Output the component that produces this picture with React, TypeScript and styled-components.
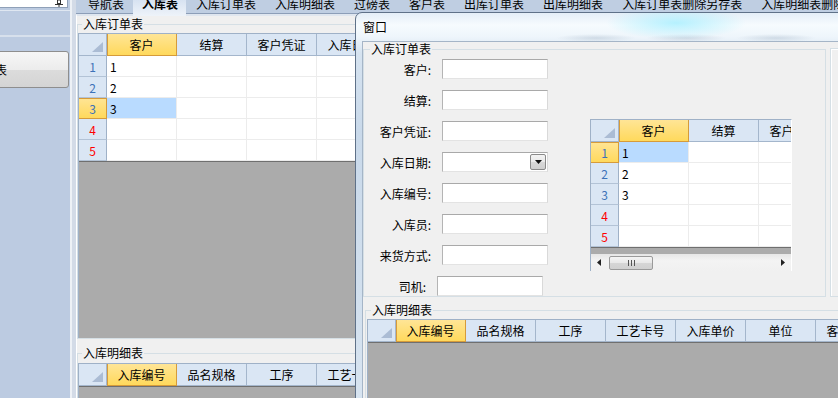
import { FC } from 'react';
import styled, { createGlobalStyle } from 'styled-components';

const tabs = ['导航表', '入库表', '入库订单表', '入库明细表', '过磅表', '客户表', '出库订单表', '出库明细表', '入库订单表删除另存表', '入库明细表删除另存表'];
const orderColumns = ['客户', '结算', '客户凭证', '入库日期', '入库编号', '入库员', '来货方式'];
const detailColumns = ['入库编号', '品名规格', '工序', '工艺卡号', '入库单价', '单位', '客户名称'];
const formFields = [
  { label: '客户:' },
  { label: '结算:' },
  { label: '客户凭证:' },
  { label: '入库日期:', dropdown: true },
  { label: '入库编号:' },
  { label: '入库员:' },
  { label: '来货方式:' },
  { label: '司机:', shift: 5 },
];

interface IGridProps {
  columns: string[];
  values?: string[];
  rowCount?: number;
  activeCol?: number;
  activeRow?: number;
  fill: number;
  scroll?: boolean;
  width?: number;
}

const DataGrid: FC<IGridProps> = ({ columns, values = [], rowCount = 0, activeCol = 0, activeRow = -1, fill, scroll, width }) => (
  <GridBox $width={width}>
    <HeadRow>
      <Corner>
        <svg width='11' height='10'><polygon points='11,0 11,10 0,10' fill='#abbcd4' /></svg>
      </Corner>
      {columns.map((c, i) => <HeadCell key={c + i} $active={i === activeCol}>{c}</HeadCell>)}
    </HeadRow>
    {Array.from({ length: rowCount }).map((_, r) => (
      <Row key={r}>
        <RowHead $active={r === activeRow} $fresh={r >= values.length}>{r + 1}</RowHead>
        {columns.map((c, i) => (
          <Cell key={c + i} $selected={r === activeRow && i === activeCol}>{i === 0 ? values[r] : ''}</Cell>
        ))}
      </Row>
    ))}
    <Blank $height={fill} />
    {scroll && (
      <ScrollBar>
        <svg width='4' height='7'><polygon points='4,0 4,7 0,3.5' fill='#222' /></svg>
        <Thumb>
          <svg width='7' height='6'>
            <path d='M0.5 0v6M3.5 0v6M6.5 0v6' stroke='#555' strokeWidth='1' />
          </svg>
        </Thumb>
        <ScrollSpace />
        <svg width='4' height='7'><polygon points='0,0 4,3.5 0,7' fill='#222' /></svg>
      </ScrollBar>
    )}
  </GridBox>
);

const App: FC = () => {
  return (
    <>
      <GlobalStyle />
      <Screen>
        <SidePanel>
          <PinBar>
            <svg width='8' height='7'>
              <rect x='2.5' y='0' width='3' height='3.5' fill='none' stroke='#333' strokeWidth='1' />
              <path d='M0 4.5h8M4 4.5v3' stroke='#333' strokeWidth='1' />
            </svg>
          </PinBar>
          <SideBand />
          <SideButton>入库表</SideButton>
        </SidePanel>
        <Splitter />

        <Workspace>
          <TabStrip>
            {tabs.map((t, i) => (
              <Tab key={t} $active={i === 1}><TabText>{t}</TabText></Tab>
            ))}
          </TabStrip>
          <TabBody>
            <Group>
              <Legend>入库订单表</Legend>
              <DataGrid columns={orderColumns} values={['1', '2', '3']} rowCount={5} activeRow={2} fill={177} />
            </Group>
            <Group $gap={7} $pad={3}>
              <Legend>入库明细表</Legend>
              <DataGrid columns={detailColumns} fill={40} />
            </Group>
          </TabBody>
        </Workspace>

        <Window>
          <TitleBar>窗口</TitleBar>
          <Client>
            <TopRow>
              <Group $width={463} $pad={3}>
                <Legend $indent={6}>入库订单表</Legend>
                <FormArea>
                  <Form>
                    {formFields.map((f) => (
                      <FormRow key={f.label} $shift={f.shift || 0}>
                        <Label>{f.label}</Label>
                        <Input>
                          {f.dropdown && (
                            <DropButton>
                              <svg width='7' height='4'><polygon points='0,0 7,0 3.5,4' fill='#111' /></svg>
                            </DropButton>
                          )}
                        </Input>
                      </FormRow>
                    ))}
                  </Form>
                  <InnerGridSlot>
                    <DataGrid columns={orderColumns} values={['1', '2', '3']} rowCount={5} activeRow={0} fill={7} scroll width={202} />
                  </InnerGridSlot>
                </FormArea>
              </Group>
              <SideGroup />
            </TopRow>
            <Group $gap={6} $pad={2} $indent={2}>
              <Legend $indent={4}>入库明细表</Legend>
              <DataGrid columns={detailColumns} fill={80} />
            </Group>
          </Client>
        </Window>
      </Screen>
    </>
  );
};

const GlobalStyle = createGlobalStyle`
  html, body {
    margin: 0;
    padding: 0;
  }
  body {
    font-family: "Noto Sans CJK SC", "Liberation Sans", sans-serif;
    font-size: 12px;
    color: #000;
    background: #f0f0f0;
  }
  * {
    box-sizing: border-box;
  }
`;

const Screen = styled.div`
  width: 838px;
  height: 398px;
  position: relative;
  overflow: hidden;
  display: flex;
  background: #f0f0f0;
`;

const SidePanel = styled.div`
  width: 70px;
  flex-shrink: 0;
  overflow: hidden;
  background: #bccbe1;
  display: flex;
  flex-direction: column;
`;

const PinBar = styled.div`
  width: 68px;
  height: 8px;
  padding-right: 4px;
  background: #fff;
  border-right: 1px solid #8fa0b8;
  border-bottom: 1px solid #8fa0b8;
  display: flex;
  justify-content: flex-end;
`;

const SideBand = styled.div`
  height: 27px;
  margin-top: 2px;
  border-top: 1px solid #dfe7f1;
  border-bottom: 2px solid #d7e0ec;
`;

const SideButton = styled.div`
  width: 129px;
  height: 37px;
  margin: 14px 0 0 -60px;
  padding-left: 30px;
  border: 1px solid #8e8e8e;
  border-radius: 3px;
  background: linear-gradient(180deg, #f6f6f6 0%, #ececec 50%, #dcdcdc 51%, #d4d4d4 100%);
  display: flex;
  align-items: center;
  white-space: nowrap;
`;

const Splitter = styled.div`
  width: 6px;
  flex-shrink: 0;
  border-left: 2px solid #edf1f6;
  background: #d3dbe7;
`;

const Workspace = styled.div`
  flex: 1;
  min-width: 0;
  display: flex;
  flex-direction: column;
`;

const TabStrip = styled.div`
  height: 14px;
  padding-left: 2px;
  flex-shrink: 0;
  border-bottom: 1px solid #8c9eb8;
  background: #bfcee2;
  display: flex;
  white-space: nowrap;
`;

const Tab = styled.div<{ $active?: boolean }>`
  height: ${(p) => (p.$active ? 16 : 13)}px;
  padding: ${(p) => (p.$active ? '0 8px 0 9px' : '0 9px 0 10px')};
  flex-shrink: 0;
  position: relative;
  z-index: 1;
  font-weight: ${(p) => (p.$active ? 700 : 400)};
  background: ${(p) => (p.$active ? 'linear-gradient(180deg, #d7e2f1 0%, #eef3f9 100%)' : 'transparent')};
`;

const TabText = styled.span`
  display: block;
  margin-top: -2px;
  line-height: 12px;
`;

const TabBody = styled.div`
  flex: 1;
  padding-top: 1px;
  border-left: 1px solid #fff;
  border-top: 2px solid #dfe6ef;
  background: #f0f0f0;
  display: flex;
  flex-direction: column;
`;

const Group = styled.fieldset<{ $width?: number; $gap?: number; $pad?: number; $indent?: number }>`
  width: ${(p) => (p.$width ? `${p.$width}px` : 'auto')};
  min-width: 0;
  margin: ${(p) => p.$gap || 0}px 0 0 ${(p) => p.$indent || 0}px;
  padding: ${(p) => p.$pad ?? 2}px 0 0 ${(p) => (p.$indent ? 1 : 0)}px;
  border: 1px solid #d5dfe5;
  flex-shrink: 0;
`;

const Legend = styled.legend<{ $indent?: number }>`
  margin-left: ${(p) => p.$indent ?? 4}px;
  padding: 0 1px;
  line-height: 14px;
  font-size: 12px;
`;

const GridBox = styled.div<{ $width?: number }>`
  width: ${(p) => (p.$width ? `${p.$width}px` : '100%')};
  overflow: hidden;
  flex-shrink: 0;
  border-top: 1px solid #9fb1c7;
  border-left: 1px solid #9fb1c7;
  border-right: ${(p) => (p.$width ? '1px solid #fff' : 'none')};
`;

const HeadRow = styled.div`
  height: 22px;
  display: flex;
`;

const Corner = styled.div`
  flex: 0 0 28px;
  padding: 0 3px 3px 0;
  background: #dae6f4;
  border-right: 1px solid #a4b6cc;
  border-bottom: 1px solid #a4b6cc;
  display: flex;
  justify-content: flex-end;
  align-items: flex-end;
`;

const HeadCell = styled.div<{ $active?: boolean }>`
  flex: 0 0 70px;
  white-space: nowrap;
  overflow: hidden;
  background: ${(p) => (p.$active ? 'linear-gradient(180deg, #ffe596 0%, #ffd95c 100%)' : '#dae6f4')};
  border-right: 1px solid ${(p) => (p.$active ? '#d69b3a' : '#a4b6cc')};
  border-bottom: 1px solid ${(p) => (p.$active ? '#d69b3a' : '#a4b6cc')};
  box-shadow: ${(p) => (p.$active ? 'inset 1px 0 0 #d69b3a' : 'none')};
  display: flex;
  align-items: center;
  justify-content: center;
`;

const Row = styled.div`
  height: 21px;
  display: flex;
`;

const RowHead = styled.div<{ $active?: boolean; $fresh?: boolean }>`
  flex: 0 0 28px;
  color: ${(p) => (p.$fresh ? '#f00' : '#3d72b8')};
  background: ${(p) => (p.$active ? 'linear-gradient(180deg, #ffe596 0%, #ffd95c 100%)' : '#dae6f4')};
  border-right: 1px solid ${(p) => (p.$active ? '#d69b3a' : '#9fb1c7')};
  border-bottom: 1px solid ${(p) => (p.$active ? '#d69b3a' : '#b3c3d6')};
  box-shadow: ${(p) => (p.$active ? 'inset 0 1px 0 #d69b3a' : 'none')};
  display: flex;
  align-items: center;
  justify-content: center;
`;

const Cell = styled.div<{ $selected?: boolean }>`
  flex: 0 0 70px;
  padding-left: 3px;
  background: ${(p) => (p.$selected ? '#b9dbff' : '#fff')};
  border-right: 1px solid #ececec;
  border-bottom: 1px solid #ececec;
  display: flex;
  align-items: center;
`;

const Blank = styled.div<{ $height: number }>`
  height: ${(p) => p.$height}px;
  background: #ababab;
  border-top: 1px solid #6f6f6f;
`;

const ScrollBar = styled.div`
  height: 17px;
  padding: 0 6px;
  background: linear-gradient(180deg, #e6e6e6 0%, #f3f3f3 40%, #f0f0f0 100%);
  display: flex;
  align-items: center;
`;

const Thumb = styled.div`
  width: 44px;
  height: 14px;
  margin-left: 8px;
  border: 1px solid #9a9a9a;
  border-radius: 2px;
  background: linear-gradient(180deg, #f4f4f4 0%, #e8e8e8 50%, #d6d6d6 51%, #d0d0d0 100%);
  display: flex;
  align-items: center;
  justify-content: center;
`;

const ScrollSpace = styled.div`
  flex: 1;
`;

const Window = styled.div`
  width: 520px;
  height: 420px;
  padding-left: 6px;
  position: absolute;
  left: 355px;
  top: 12px;
  border: 1px solid #5f7188;
  border-radius: 7px 7px 0 0;
  background:
    radial-gradient(70px 16px at 320px 10px, rgba(160, 238, 255, 0.75), rgba(160, 238, 255, 0)),
    radial-gradient(40px 4px at 240px 25px, rgba(150, 170, 190, 0.35), rgba(150, 170, 190, 0)),
    radial-gradient(40px 4px at 330px 25px, rgba(150, 170, 190, 0.35), rgba(150, 170, 190, 0)),
    radial-gradient(40px 4px at 420px 25px, rgba(150, 170, 190, 0.35), rgba(150, 170, 190, 0)),
    linear-gradient(180deg, #e4eef8 0px, #f6fbfe 12px, #eef5fb 24px, #d6e3f0 40px, #c9d9ea 120px, #d9e5f1 100%);
  display: flex;
  flex-direction: column;
`;

const TitleBar = styled.div`
  height: 28px;
  padding: 1px 0 0 1px;
  flex-shrink: 0;
  line-height: 26px;
  color: #000;
  text-shadow: 0 0 4px #fff, 0 0 2px #fff, 0 0 1px #fff;
`;

const Client = styled.div`
  flex: 1;
  border-top: 1px solid #a5b5c7;
  border-left: 1px solid #a5b5c7;
  background: #f0f0f0;
  display: flex;
  flex-direction: column;
`;

const TopRow = styled.div`
  display: flex;
  align-items: flex-start;
`;

const FormArea = styled.div`
  display: flex;
  align-items: flex-start;
`;

const Form = styled.div`
  display: flex;
  flex-direction: column;
  gap: 11px;
`;

const FormRow = styled.div<{ $shift: number }>`
  height: 20px;
  margin-left: ${(p) => -p.$shift}px;
  display: flex;
  align-items: center;
  gap: 11px;
`;

const Label = styled.div`
  width: 67px;
  text-align: right;
  white-space: nowrap;
`;

const Input = styled.div`
  width: 106px;
  height: 20px;
  padding: 1px;
  background: #fff;
  border: 1px solid;
  border-color: #a9a9a9 #d9d9d9 #e3e3e3 #b4b4b4;
  display: flex;
  justify-content: flex-end;
`;

const DropButton = styled.div`
  width: 16px;
  height: 16px;
  border: 1px solid #8a8a8a;
  border-radius: 2px;
  background: linear-gradient(180deg, #f3f3f3 0%, #e9e9e9 50%, #d8d8d8 51%, #cfcfcf 100%);
  display: flex;
  align-items: center;
  justify-content: center;
`;

const InnerGridSlot = styled.div`
  margin: 60px 0 0 42px;
`;

const SideGroup = styled.div`
  width: 30px;
  height: 249px;
  margin: 6px 0 0 4px;
  flex-shrink: 0;
  border: 1px solid #d5dfe5;
  box-shadow: inset 1px 1px 0 #fff;
`;

export default App;
